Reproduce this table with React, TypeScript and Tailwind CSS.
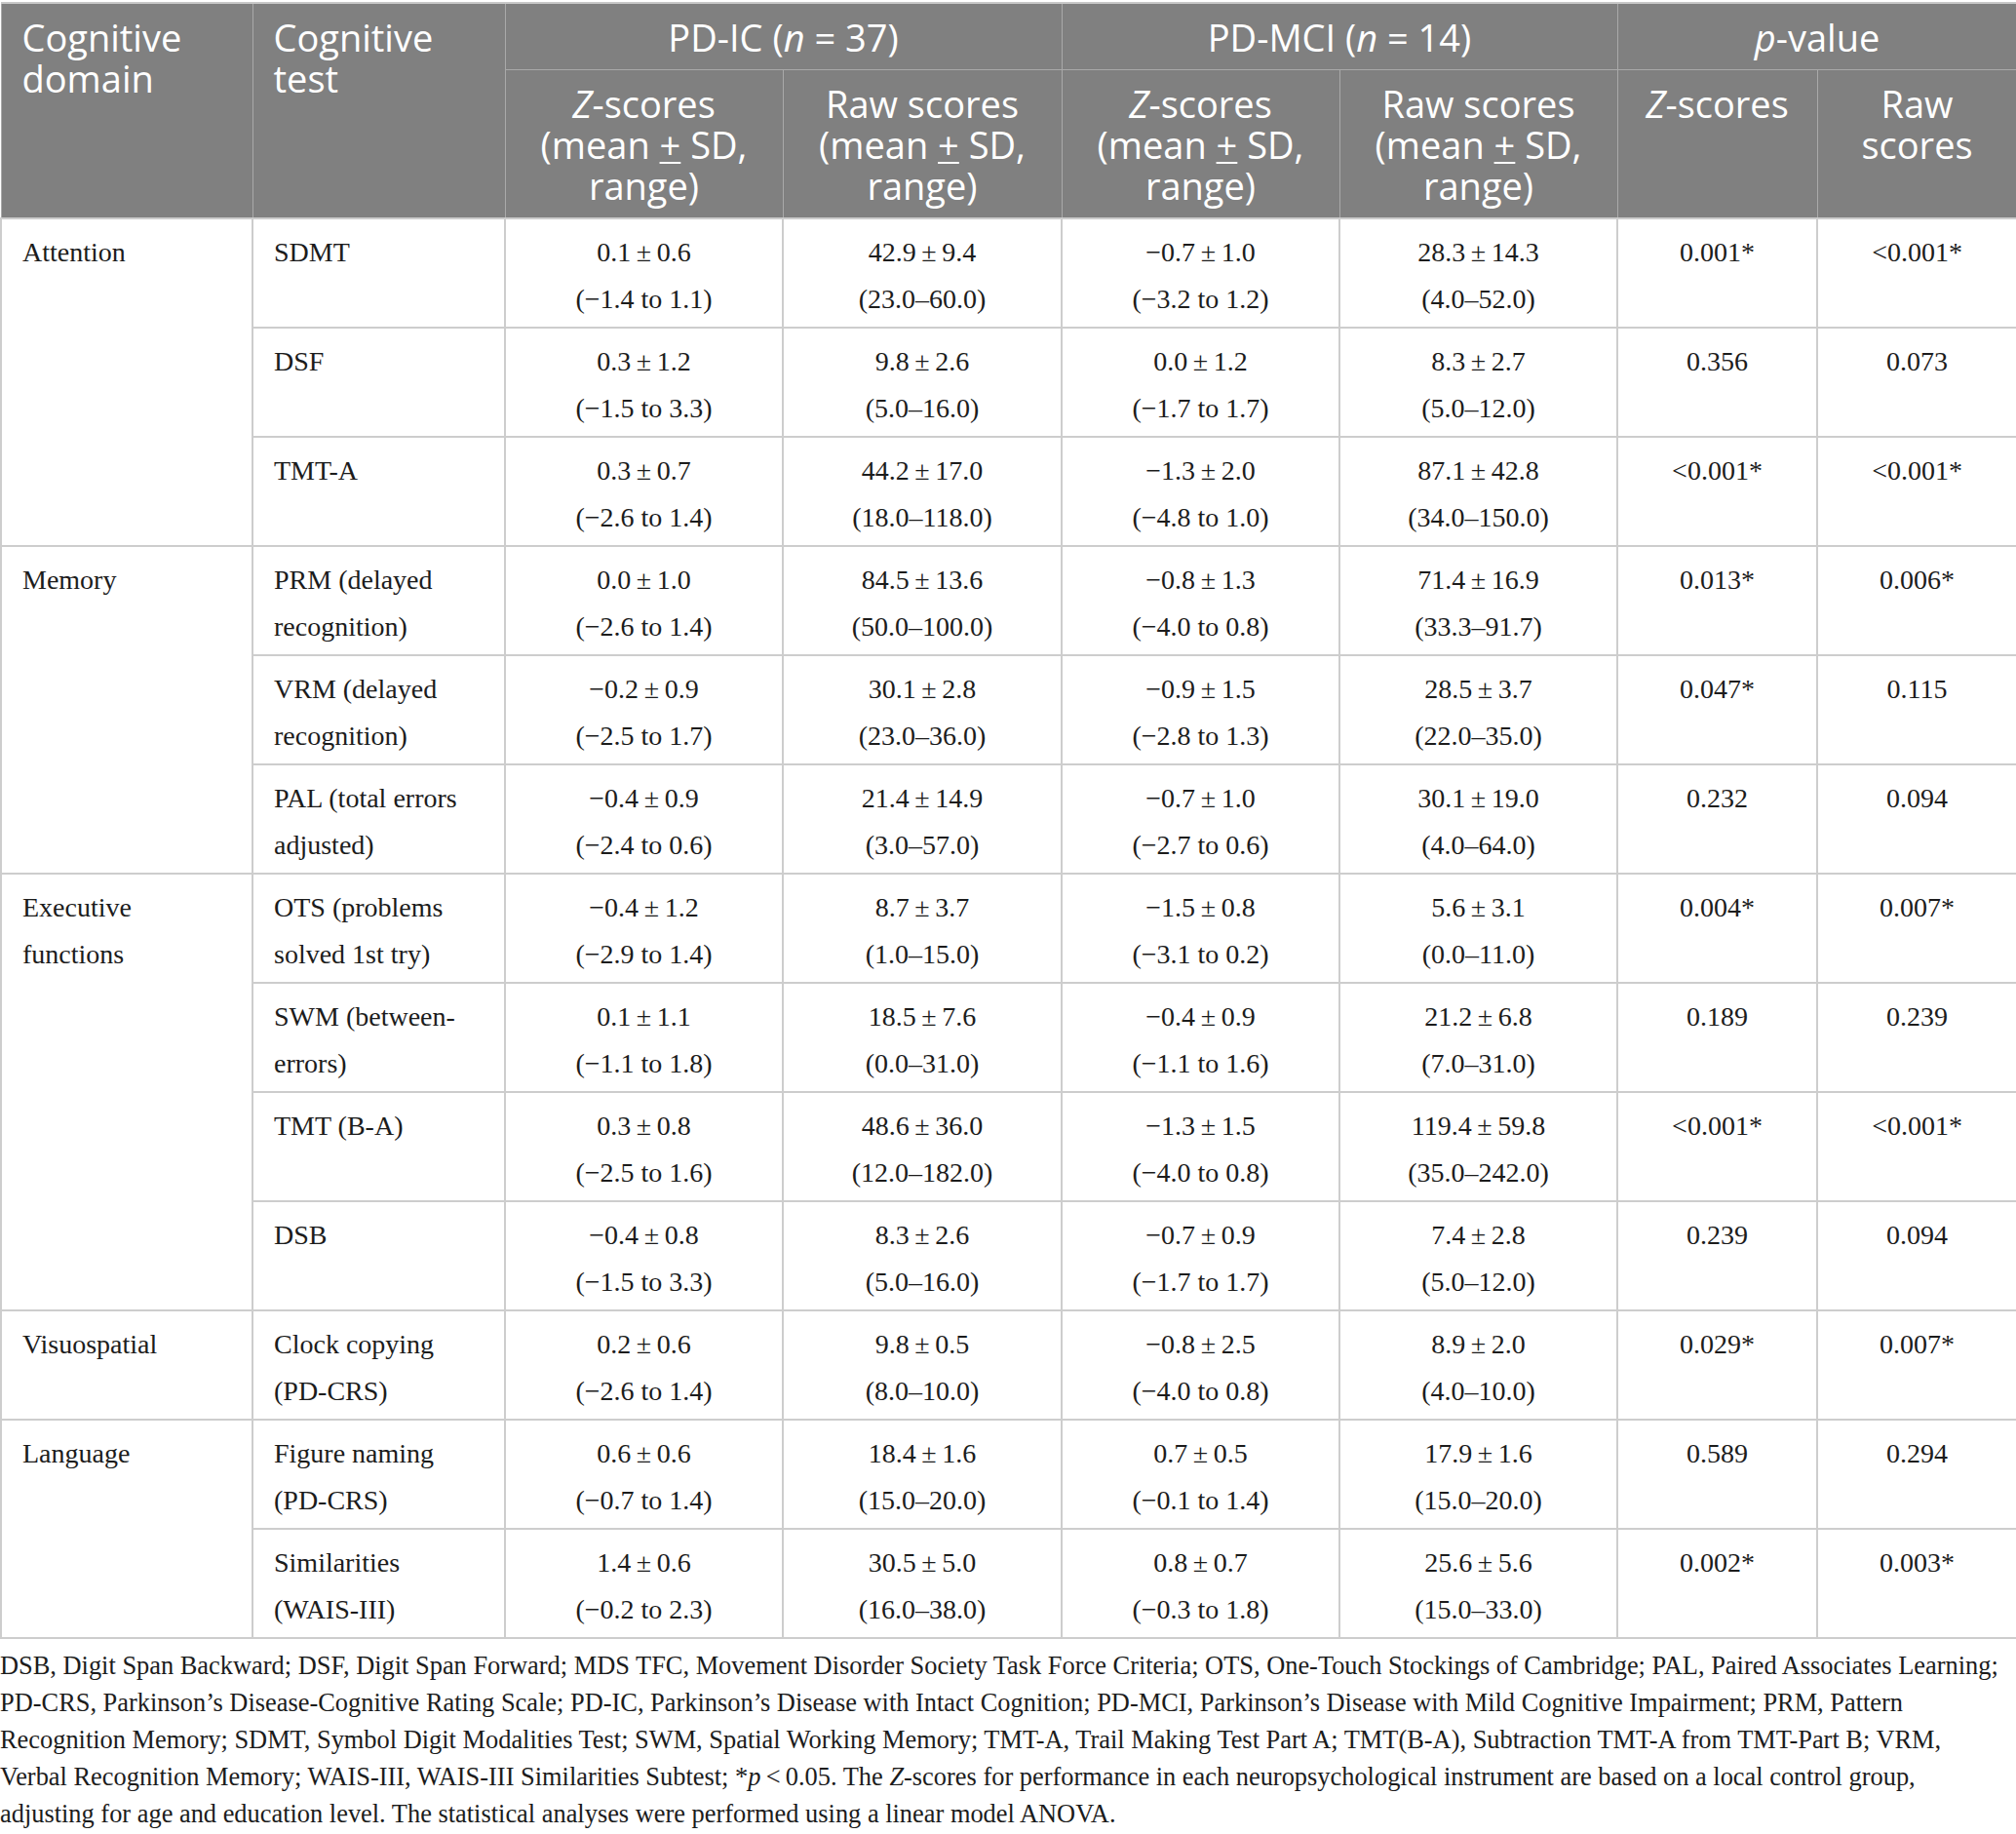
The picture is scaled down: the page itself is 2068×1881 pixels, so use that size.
import React from "react";

type Row = {
  domain?: string[];
  span?: number;
  test: string[];
  cells: [string, string][];
  p: [string, string];
};

const rows: Row[] = [
  {
    domain: ["Attention"],
    span: 3,
    test: ["SDMT"],
    cells: [
      ["0.1 ± 0.6", "(−1.4 to 1.1)"],
      ["42.9 ± 9.4", "(23.0–60.0)"],
      ["−0.7 ± 1.0", "(−3.2 to 1.2)"],
      ["28.3 ± 14.3", "(4.0–52.0)"],
    ],
    p: ["0.001*", "<0.001*"],
  },
  {
    test: ["DSF"],
    cells: [
      ["0.3 ± 1.2", "(−1.5 to 3.3)"],
      ["9.8 ± 2.6", "(5.0–16.0)"],
      ["0.0 ± 1.2", "(−1.7 to 1.7)"],
      ["8.3 ± 2.7", "(5.0–12.0)"],
    ],
    p: ["0.356", "0.073"],
  },
  {
    test: ["TMT-A"],
    cells: [
      ["0.3 ± 0.7", "(−2.6 to 1.4)"],
      ["44.2 ± 17.0", "(18.0–118.0)"],
      ["−1.3 ± 2.0", "(−4.8 to 1.0)"],
      ["87.1 ± 42.8", "(34.0–150.0)"],
    ],
    p: ["<0.001*", "<0.001*"],
  },
  {
    domain: ["Memory"],
    span: 3,
    test: ["PRM (delayed", "recognition)"],
    cells: [
      ["0.0 ± 1.0", "(−2.6 to 1.4)"],
      ["84.5 ± 13.6", "(50.0–100.0)"],
      ["−0.8 ± 1.3", "(−4.0 to 0.8)"],
      ["71.4 ± 16.9", "(33.3–91.7)"],
    ],
    p: ["0.013*", "0.006*"],
  },
  {
    test: ["VRM (delayed", "recognition)"],
    cells: [
      ["−0.2 ± 0.9", "(−2.5 to 1.7)"],
      ["30.1 ± 2.8", "(23.0–36.0)"],
      ["−0.9 ± 1.5", "(−2.8 to 1.3)"],
      ["28.5 ± 3.7", "(22.0–35.0)"],
    ],
    p: ["0.047*", "0.115"],
  },
  {
    test: ["PAL (total errors", "adjusted)"],
    cells: [
      ["−0.4 ± 0.9", "(−2.4 to 0.6)"],
      ["21.4 ± 14.9", "(3.0–57.0)"],
      ["−0.7 ± 1.0", "(−2.7 to 0.6)"],
      ["30.1 ± 19.0", "(4.0–64.0)"],
    ],
    p: ["0.232", "0.094"],
  },
  {
    domain: ["Executive", "functions"],
    span: 4,
    test: ["OTS (problems", "solved 1st try)"],
    cells: [
      ["−0.4 ± 1.2", "(−2.9 to 1.4)"],
      ["8.7 ± 3.7", "(1.0–15.0)"],
      ["−1.5 ± 0.8", "(−3.1 to 0.2)"],
      ["5.6 ± 3.1", "(0.0–11.0)"],
    ],
    p: ["0.004*", "0.007*"],
  },
  {
    test: ["SWM (between-", "errors)"],
    cells: [
      ["0.1 ± 1.1", "(−1.1 to 1.8)"],
      ["18.5 ± 7.6", "(0.0–31.0)"],
      ["−0.4 ± 0.9", "(−1.1 to 1.6)"],
      ["21.2 ± 6.8", "(7.0–31.0)"],
    ],
    p: ["0.189", "0.239"],
  },
  {
    test: ["TMT (B-A)"],
    cells: [
      ["0.3 ± 0.8", "(−2.5 to 1.6)"],
      ["48.6 ± 36.0", "(12.0–182.0)"],
      ["−1.3 ± 1.5", "(−4.0 to 0.8)"],
      ["119.4 ± 59.8", "(35.0–242.0)"],
    ],
    p: ["<0.001*", "<0.001*"],
  },
  {
    test: ["DSB"],
    cells: [
      ["−0.4 ± 0.8", "(−1.5 to 3.3)"],
      ["8.3 ± 2.6", "(5.0–16.0)"],
      ["−0.7 ± 0.9", "(−1.7 to 1.7)"],
      ["7.4 ± 2.8", "(5.0–12.0)"],
    ],
    p: ["0.239", "0.094"],
  },
  {
    domain: ["Visuospatial"],
    span: 1,
    test: ["Clock copying", "(PD-CRS)"],
    cells: [
      ["0.2 ± 0.6", "(−2.6 to 1.4)"],
      ["9.8 ± 0.5", "(8.0–10.0)"],
      ["−0.8 ± 2.5", "(−4.0 to 0.8)"],
      ["8.9 ± 2.0", "(4.0–10.0)"],
    ],
    p: ["0.029*", "0.007*"],
  },
  {
    domain: ["Language"],
    span: 2,
    test: ["Figure naming", "(PD-CRS)"],
    cells: [
      ["0.6 ± 0.6", "(−0.7 to 1.4)"],
      ["18.4 ± 1.6", "(15.0–20.0)"],
      ["0.7 ± 0.5", "(−0.1 to 1.4)"],
      ["17.9 ± 1.6", "(15.0–20.0)"],
    ],
    p: ["0.589", "0.294"],
  },
  {
    test: ["Similarities", "(WAIS-III)"],
    cells: [
      ["1.4 ± 0.6", "(−0.2 to 2.3)"],
      ["30.5 ± 5.0", "(16.0–38.0)"],
      ["0.8 ± 0.7", "(−0.3 to 1.8)"],
      ["25.6 ± 5.6", "(15.0–33.0)"],
    ],
    p: ["0.002*", "0.003*"],
  },
];

const th = "border border-[#a9a9a9] align-top pt-[13px] pb-[12px] font-normal";
const td = "border-2 border-[#cdcdcd] align-top pt-[10px] pb-[2px]";

function Pm({ text }: { text: string }) {
  // thin spaces round the ± like the typeset original
  return <>{text.replace(" ± ", "\u2009±\u2009")}</>;
}

function MeanSd() {
  return (
    <>
      (mean <span className="underline underline-offset-[3px] decoration-2">+</span> SD,
    </>
  );
}

export default function App() {
  return (
    <div className="w-[2068px] bg-white pt-[2px] text-[#1c1c1c]">
      <table className="w-[2068px] table-fixed border-collapse font-['Liberation_Serif',serif] text-[28px] leading-[48px]">
        <colgroup>
          <col className="w-[258px]" />
          <col className="w-[259px]" />
          <col className="w-[285px]" />
          <col className="w-[286px]" />
          <col className="w-[285px]" />
          <col className="w-[285px]" />
          <col className="w-[205px]" />
          <col className="w-[205px]" />
        </colgroup>
        <thead className="bg-[#808080] font-['Open_Sans',sans-serif] text-[38px] leading-[42px] text-white">
          <tr className="h-[68px] border-t-2 border-[#c8c8c8]">
            <th rowSpan={2} className={`${th} pl-[21px] text-left`}>
              Cognitive
              <br />
              domain
            </th>
            <th rowSpan={2} className={`${th} pl-[21px] text-left`}>
              Cognitive
              <br />
              test
            </th>
            <th colSpan={2} className={`${th} text-center`}>
              PD-IC (<i>n</i> = 37)
            </th>
            <th colSpan={2} className={`${th} text-center`}>
              PD-MCI (<i>n</i> = 14)
            </th>
            <th colSpan={2} className={`${th} text-center`}>
              <i>p</i>-value
            </th>
          </tr>
          <tr className="h-[152px]">
            {[0, 1].map((g) => (
              <React.Fragment key={g}>
                <th className={`${th} text-center`}>
                  <i>Z</i>-scores
                  <br />
                  <MeanSd />
                  <br />
                  range)
                </th>
                <th className={`${th} text-center`}>
                  Raw scores
                  <br />
                  <MeanSd />
                  <br />
                  range)
                </th>
              </React.Fragment>
            ))}
            <th className={`${th} text-center`}>
              <i>Z</i>-scores
            </th>
            <th className={`${th} text-center`}>
              Raw
              <br />
              scores
            </th>
          </tr>
        </thead>
        <tbody>
          {rows.map((r, i) => (
            <tr key={i} className="h-[112px]">
              {r.domain && (
                <td rowSpan={r.span} className={`${td} pl-[21px] text-left`}>
                  {r.domain.map((l, k) => (
                    <div key={k}>{l}</div>
                  ))}
                </td>
              )}
              <td className={`${td} pl-[21px] text-left whitespace-nowrap`}>
                {r.test.map((l, k) => (
                  <div key={k}>{l}</div>
                ))}
              </td>
              {r.cells.map((c, k) => (
                <td key={k} className={`${td} text-center whitespace-nowrap`}>
                  <div>
                    <Pm text={c[0]} />
                  </div>
                  <div>{c[1]}</div>
                </td>
              ))}
              <td className={`${td} text-center`}>{r.p[0]}</td>
              <td className={`${td} text-center`}>{r.p[1]}</td>
            </tr>
          ))}
        </tbody>
      </table>
      <div className="mt-[8px] font-['Liberation_Serif',serif] text-[26.4px] leading-[38px] text-[#1c1c1c] whitespace-nowrap">
        <div>
          DSB, Digit Span Backward; DSF, Digit Span Forward; MDS TFC, Movement Disorder Society Task Force Criteria; OTS,
          One-Touch Stockings of Cambridge; PAL, Paired Associates Learning;
        </div>
        <div>
          PD-CRS, Parkinson’s Disease-Cognitive Rating Scale; PD-IC, Parkinson’s Disease with Intact Cognition; PD-MCI,
          Parkinson’s Disease with Mild Cognitive Impairment; PRM, Pattern
        </div>
        <div>
          Recognition Memory; SDMT, Symbol Digit Modalities Test; SWM, Spatial Working Memory; TMT-A, Trail Making Test Part
          A; TMT(B-A), Subtraction TMT-A from TMT-Part B; VRM,
        </div>
        <div>
          Verbal Recognition Memory; WAIS-III, WAIS-III Similarities Subtest; *<i>p</i>{"\u2009<\u2009"}0.05. The{" "}
          <i>Z</i>-scores for performance in each neuropsychological instrument are based on a local control group,
        </div>
        <div>
          adjusting for age and education level. The statistical analyses were performed using a linear model ANOVA.
        </div>
      </div>
    </div>
  );
}
